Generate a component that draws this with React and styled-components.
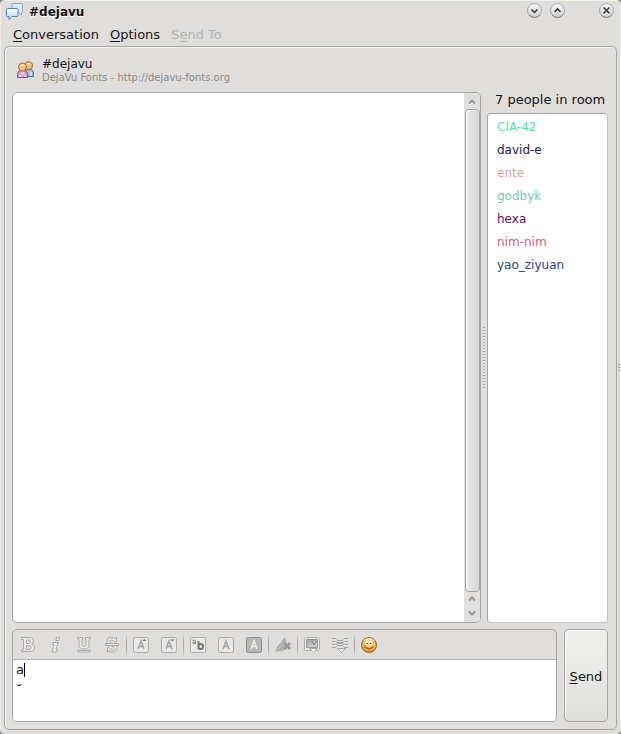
import React, { useState } from 'react';
import styled, { createGlobalStyle, css } from 'styled-components';


const GlobalStyle = createGlobalStyle`
  * {
    box-sizing: border-box;
  }

  body {
    margin: 0;
    background: #8f8e8d;
    color: #141312;
    font-family: "DejaVu Sans", sans-serif;
    font-size: 13px;
    line-height: 16px;
  }

  button, textarea {
    font: inherit;
    color: inherit;
  }
`;

const people = [
  { name: 'CIA-42', color: '#54dfae' },
  { name: 'david-e', color: '#18165c' },
  { name: 'ente', color: '#dba3a3' },
  { name: 'godbyk', color: '#74c8bb' },
  { name: 'hexa', color: '#5e0b5c' },
  { name: 'nim-nim', color: '#cb6080' },
  { name: 'yao_ziyuan', color: '#234784' },
];

const Window = styled.div`
  display: flex;
  flex-direction: column;
  min-height: 100vh;
  padding: 0 3px 4px;
  border: solid #efefee;
  border-width: 1px 1px 0;
  border-radius: 5px;
  background: #dfdedd;
  position: relative;
`;

const TitleBar = styled.header`
  display: flex;
  align-items: center;
  height: 21px;
  padding: 0 2px;
`;

const Title = styled.h1`
  flex: 1;
  margin: 0 0 0 6px;
  font-size: 12px;
  font-weight: bold;
  text-shadow: 0 1px 0 #fff;
`;

const WindowButton = styled.button`
  display: block;
  width: 17px;
  height: 17px;
  margin-left: ${({ $apart }) => ($apart ? '32px' : '6px')};
  padding: 0;
  border: 0;
  background: none;

  svg {
    display: block;
  }
`;

const MenuBar = styled.nav`
  display: flex;
  gap: 11px;
  height: 24px;
  padding: 5px 9px 3px;
`;

const MenuItem = styled.button`
  padding: 0;
  border: 0;
  background: none;
  line-height: 16px;

  &:disabled {
    color: #b5b4b3;
  }
`;

const Key = styled.span`
  text-decoration: underline;
  text-underline-offset: 2px;
  text-decoration-thickness: 1px;
`;

const Panel = styled.main`
  flex: 1;
  display: flex;
  flex-direction: column;
  gap: 6px;
  padding: 0 8px 7px 7px;
  border: 1px solid #a6a5a4;
  border-radius: 5px;
  box-shadow: inset 1px 1px 0 #f3f3f2;
`;

const Room = styled.div`
  flex: 1;
  display: flex;
`;

const Conversation = styled.section`
  flex: 1;
  display: flex;
  flex-direction: column;
`;

const RoomHeader = styled.div`
  display: flex;
  align-items: center;
  gap: 8px;
  height: 45px;
  padding: 0 5px;
`;

const RoomName = styled.h2`
  margin: 0;
  font-size: 12px;
  font-weight: normal;
  line-height: 16px;
`;

const Topic = styled.p`
  margin: 0;
  color: #8a8988;
  font-size: 10px;
  line-height: 12px;
`;

const frame = css`
  border: 1px solid #a6a5a4;
  border-radius: 5px;
  overflow: hidden;
`;

const ChatFrame = styled.div`
  ${frame}
  flex: 1;
  display: flex;
  background: #fff;
`;

const Messages = styled.div`
  flex: 1;
`;

const ScrollBar = styled.div`
  display: flex;
  flex-direction: column;
  align-items: center;
  width: 16px;
  padding: 2px 0;
  background: #e1e0df;

  svg {
    display: block;
  }
`;

const Thumb = styled.div`
  flex: 1;
  width: 15px;
  border: 1px solid #a3a2a1;
  border-radius: 4px;
  background: linear-gradient(90deg, #efeeed, #dfdedd 60%, #d6d5d4);
  box-shadow: inset 1px 1px 0 #fff;
`;

const Splitter = styled.div`
  display: flex;
  align-items: center;
  justify-content: center;
  width: 6px;
  padding-top: 45px;
`;

const Grip = styled.div`
  width: 2px;
  height: 62px;
  background: repeating-linear-gradient(#a9a8a7 0 1px, transparent 1px 3px);
`;

const Members = styled.aside`
  display: flex;
  flex-direction: column;
  width: 121px;
`;

const MemberCount = styled.h2`
  margin: 0;
  padding: 45px 0 5px 8px;
  font-size: 13px;
  font-weight: normal;
  line-height: 16px;
  white-space: nowrap;
`;

const MemberList = styled.ul`
  flex: 1;
  margin: 0;
  padding: 2px 9px;
  border: 1px solid #c5c4c3;
  border-top-color: #a6a5a4;
  border-left-color: #a6a5a4;
  border-radius: 4px;
  background: #fff;
  list-style: none;
`;

const Member = styled.li`
  color: ${({ $color }) => $color};
  font-size: 12px;
  line-height: 23px;
`;

const Composer = styled.form`
  display: flex;
  gap: 7px;
  height: 93px;
`;

const Editor = styled.div`
  ${frame}
  flex: 1;
  display: flex;
  flex-direction: column;
`;

const ToolBar = styled.div`
  display: flex;
  align-items: center;
  height: 30px;
  padding-left: 1px;
  border-bottom: 1px solid #b5b4b3;
`;

const Tool = styled.button`
  width: 28px;
  height: 28px;
  padding: 5px;
  border: 0;
  background: none;

  svg {
    display: block;
  }
`;

const Divider = styled.span`
  width: 1px;
  height: 24px;
  background: linear-gradient(transparent, #a6a5a4 40%, #a6a5a4 60%, transparent);
`;

const TextWrap = styled.div`
  flex: 1;
  display: flex;
  position: relative;
`;

const MessageText = styled.textarea`
  flex: 1;
  padding: 0 3px;
  border: 0;
  outline: 0;
  background: #fff;
  caret-color: transparent;
  line-height: 20px;
  resize: none;
`;

const Caret = styled.span`
  position: absolute;
  top: 3px;
  left: 11px;
  width: 1px;
  height: 14px;
  background: #000;
`;

const SendButton = styled.button`
  width: 44px;
  padding: 2px 0 0;
  border: 1px solid #a6a5a4;
  border-radius: 5px;
  background: linear-gradient(#f0f0ef, #e0dfde);
  box-shadow: inset 1px 1px 0 #fafafa;
`;

const ResizeGrip = styled.div`
  position: absolute;
  top: 363px;
  right: 0;
  width: 2px;
  height: 8px;
  background: repeating-linear-gradient(#a3a2a1 0 1px, transparent 1px 3px);
`;


const RoundIcon = ({ d }) => (
  <svg width="17" height="17" viewBox="0 0 17 17" aria-hidden="true">
    <defs>
      <linearGradient id="knob" x1="0" y1="0" x2="0" y2="1">
        <stop offset="0" stopColor="#f8f8f7" />
        <stop offset="1" stopColor="#cfcecd" />
      </linearGradient>
    </defs>
    <circle cx="8.5" cy="7.5" r="7" fill="url(#knob)" stroke="#a8a7a6" />
    <path d="M3 12Q8.500 17 14 12" fill="none" stroke="#858483" />
    <path d={d} fill="none" stroke="#fff" strokeWidth="1.500" transform="translate(0 1)" />
    <path d={d} fill="none" stroke="#373635" strokeWidth="1.600" />
  </svg>
);

const ChatIcon = () => (
  <svg width="17" height="17" viewBox="0 0 17 17" aria-hidden="true">
    <defs>
      <linearGradient id="bubble" x1="0" y1="0" x2="0" y2="1">
        <stop offset="0" stopColor="#fff" />
        <stop offset="1" stopColor="#b4d3ee" />
      </linearGradient>
    </defs>
    <path d="M7 .5h8.500q1 0 1 1v7q0 1-1 1v2.500l-2.500-2.500H7q-1 0-1-1v-7q0-1 1-1Z" fill="#dce8f2" stroke="#8ba9c4" />
    <path d="M1.500 5.500h9.500q1 0 1 1v6q0 1-1 1H6l-3 3v-3H1.500q-1 0-1-1v-6q0-1 1-1Z" fill="url(#bubble)" stroke="#4b88bd" />
  </svg>
);

const PeopleIcon = () => (
  <svg width="17" height="18" viewBox="0 0 17 18" aria-hidden="true">
    <path d="M8.500 15.500V9.500q1-1 3.500-1t3.500 1q1 1 1 6Z" fill="#a9c1e8" stroke="#3f63a6" />
    <path d="M14 11v4" stroke="#fff" />
    <circle cx="11.500" cy="4.800" r="4" fill="#ecbd7c" stroke="#a06a2c" />
    <path d="M.5 16.500q0-5 1-6 1-1 4-1t4 1q1 1 1 6Z" fill="#d0a8d2" stroke="#7f4a86" />
    <path d="M4 11.500l1.500 2 1.500-2M3 14v2M8 14v2" fill="none" stroke="#fff" />
    <circle cx="5.500" cy="6" r="4" fill="#f0c384" stroke="#a86d2b" />
    <path d="M3.200 5q2.300-2 4.600 0M9.500 3q2-1.500 4 .5" fill="none" stroke="#fae3b8" strokeWidth="1.300" />
  </svg>
);

const Arrow = ({ down }) => (
  <svg width="16" height="14" viewBox="0 0 16 14" aria-hidden="true">
    <path d={down ? 'M5 5.500l3 3 3-3' : 'M5 8.500l3-3 3 3'} fill="none" stroke="#989796" strokeWidth="2" />
  </svg>
);

const ToolIcon = ({ children }) => (
  <svg width="18" height="18" viewBox="0 0 18 18" fill="none" stroke="#aaa9a8" aria-hidden="true">
    {children}
  </svg>
);

const BoldIcon = () => (
  <ToolIcon>
    <path d="M2.500 1.500h8q4 0 4 3.500 0 2-2 3 3 .7 3 3.700 0 3.800-4.500 3.800H2.500v-2h2v-10h-2Z" fill="#ecebea" />
    <path d="M7.500 4h2q2 0 2 1.700t-2 1.800h-2ZM7.500 9.500h2.500q2 0 2 2t-2 2H7.500Z" fill="#dfdedd" />
  </ToolIcon>
);

const ItalicIcon = () => (
  <ToolIcon>
    <path d="M9.500 1.500h3l-.7 3H8.800ZM6 6.500h5L9 13.500h1.500L9.500 16H5L7 8.500H5.500Z" fill="#ecebea" />
  </ToolIcon>
);

const UnderlineIcon = () => (
  <ToolIcon>
    <path d="M2.500 1.500h5V3H7v5.500q0 2 2 2t2-2V3h-.5V1.500h5V3H14v6q0 4-5 4t-5-4V3H2.500Z" fill="#ecebea" />
    <path d="M2.500 14.500h13v1.500h-13Z" fill="#f2f2f1" />
  </ToolIcon>
);

const StrikeIcon = () => (
  <ToolIcon>
    <path d="M13.500 1.500v4.500H12Q11 4 8.500 4 6.500 4 6.500 5.500T10 7.500q4 .8 4 4 0 4.500-4.500 4.500-2 0-3.500-1l-1.500 1v-4.500H6q1 2.500 3.500 2.500 2 0 2-1.500T8.500 10Q4 9 4 5.600 4 1.500 8 1.500q2 0 3.500 1Z" fill="#ecebea" />
    <path d="M2.500 7.500h13v2h-13Z" fill="#ecebea" />
  </ToolIcon>
);

const LetterIcon = ({ mark, filled }) => (
  <ToolIcon>
    <rect x="1.500" y="1.500" width="15" height="15" rx="2" fill={filled ? '#b9b8b7' : '#e9e8e7'} stroke={filled ? '#8e8d8c' : '#adacab'} />
    <path d="M6 13l3-8 3 8M7 10.500h4" stroke={filled ? '#eeedec' : '#a5a4a3'} strokeWidth="1.600" />
    {mark === 'up' && <path d="M10.500 5l2-2 2 2Z" fill="#747372" stroke="none" />}
    {mark === 'down' && <path d="M10.500 3.500h4l-2 2Z" fill="#747372" stroke="none" />}
  </ToolIcon>
);

const FontIcon = () => (
  <ToolIcon>
    <rect x="1.500" y="1.500" width="15" height="15" rx="1" fill="#ebebea" stroke="#adacab" />
    <path d="M3.500 4.500q3-1 3 .5v3M6.500 6q-3-.2-3 1t3 .5" stroke="#858483" />
    <path d="M9.500 5v8.500M9.500 9.500q1-1.500 2.500-1.500 2 0 2 2.500T12 13q-1.500 0-2.500-1" stroke="#777675" strokeWidth="2" />
  </ToolIcon>
);

const ClearIcon = () => (
  <ToolIcon>
    <path d="M11 1l1.500 5-.5 6-3 3-3 .5L1 15.500 3 11Z" fill="#b0afae" stroke="none" />
    <path d="M4 13l3-3" stroke="#c5c4c3" />
    <path d="M10.500 7l5.500 6M16 7l-5.500 6" stroke="#9a9998" strokeWidth="2.800" />
  </ToolIcon>
);

const ImageIcon = () => (
  <ToolIcon>
    <rect x="1.500" y="1.500" width="15" height="13" rx="1" fill="#ebebea" stroke="#adacab" />
    <path d="M3.500 3.500h11v8h-11Z" fill="#b0afae" stroke="#979695" />
    <path d="M4 11q2-5 5-3.500l2-2.500 3 2v4H4Z" fill="#c9c8c7" stroke="none" />
    <path d="M9 5.500l2 3.500 2-3.500" stroke="#858483" />
    <path d="M6.500 12.500h8l-4 4Z" fill="#f3f3f2" />
  </ToolIcon>
);

const ToolsIcon = () => (
  <ToolIcon>
    <path d="M1 2.500h3.500l1.500 2h6l1.500-2H17M1 5.500h3.500l1.500 1h6l1.500-1H17M1 8.500h4l1.500-1h5l1.500 1h4M1 11.500h3.500l1.500-2h6l1.500 2H17" stroke="#a3a2a1" />
    <path d="M4 4h1.500M12.500 4H14M4 10h1.500M12.500 10H14" stroke="#f3f3f2" />
    <path d="M6.500 12.500h8l-4 4Z" fill="#f3f3f2" />
  </ToolIcon>
);

const SmileIcon = () => (
  <ToolIcon>
    <defs>
      <radialGradient id="face" cx=".5" cy=".35" r=".65">
        <stop offset="0" stopColor="#ffdc85" />
        <stop offset=".7" stopColor="#f5b047" />
        <stop offset="1" stopColor="#dd8526" />
      </radialGradient>
    </defs>
    <circle cx="9" cy="9" r="7.500" fill="url(#face)" stroke="#8d5f30" />
    <path d="M4 5q5-4.500 10 0" stroke="#ffeab5" strokeWidth="1.200" />
    <ellipse cx="7" cy="7.300" rx="1.700" ry="2.200" fill="#fff" stroke="none" />
    <ellipse cx="11" cy="7.300" rx="1.700" ry="2.200" fill="#fff" stroke="none" />
    <circle cx="7.400" cy="7.500" r=".8" fill="#4f3419" stroke="none" />
    <circle cx="10.600" cy="7.500" r=".8" fill="#4f3419" stroke="none" />
    <path d="M4.500 10.500q4.500 4.500 9 0" stroke="#a5601c" strokeWidth="1.200" />
  </ToolIcon>
);

const toolGroups = [
  [
    { label: 'Bold', icon: <BoldIcon /> },
    { label: 'Italic', icon: <ItalicIcon /> },
    { label: 'Underline', icon: <UnderlineIcon /> },
    { label: 'Strikethrough', icon: <StrikeIcon /> },
  ],
  [
    { label: 'Larger text', icon: <LetterIcon mark="up" /> },
    { label: 'Smaller text', icon: <LetterIcon mark="down" /> },
  ],
  [
    { label: 'Font', icon: <FontIcon /> },
    { label: 'Text color', icon: <LetterIcon /> },
    { label: 'Background color', icon: <LetterIcon filled /> },
  ],
  [{ label: 'Reset formatting', icon: <ClearIcon /> }],
  [
    { label: 'Insert image', icon: <ImageIcon /> },
    { label: 'Tools', icon: <ToolsIcon /> },
  ],
  [{ label: 'Insert smiley', icon: <SmileIcon /> }],
];


const App = () => {
  const [text, setText] = useState('a\n˘');

  return (
    <Window>
      <GlobalStyle />
      <TitleBar>
        <ChatIcon />
        <Title>#dejavu</Title>
        <WindowButton aria-label="Minimize"><RoundIcon d="M5.500 6.500l3 3 3-3" /></WindowButton>
        <WindowButton aria-label="Maximize"><RoundIcon d="M5.500 9l3-3 3 3" /></WindowButton>
        <WindowButton aria-label="Close" $apart><RoundIcon d="M5.500 4.500l6 6M11.500 4.500l-6 6" /></WindowButton>
      </TitleBar>
      <MenuBar>
        <MenuItem><Key>C</Key>onversation</MenuItem>
        <MenuItem><Key>O</Key>ptions</MenuItem>
        <MenuItem disabled>S<Key>e</Key>nd To</MenuItem>
      </MenuBar>
      <Panel>
        <Room>
          <Conversation>
            <RoomHeader>
              <PeopleIcon />
              <div>
                <RoomName>#dejavu</RoomName>
                <Topic>DejaVu Fonts - http://dejavu-fonts.org</Topic>
              </div>
            </RoomHeader>
            <ChatFrame>
              <Messages />
              <ScrollBar>
                <Arrow />
                <Thumb />
                <Arrow />
                <Arrow down />
              </ScrollBar>
            </ChatFrame>
          </Conversation>
          <Splitter><Grip /></Splitter>
          <Members>
            <MemberCount>{people.length} people in room</MemberCount>
            <MemberList>
              {people.map(({ name, color }) => (
                <Member key={name} $color={color}>{name}</Member>
              ))}
            </MemberList>
          </Members>
        </Room>
        <Composer onSubmit={(e) => e.preventDefault()}>
          <Editor>
            <ToolBar>
              {toolGroups.map((group, i) => (
                <React.Fragment key={i}>
                  {i > 0 && <Divider />}
                  {group.map(({ label, icon }) => (
                    <Tool key={label} type="button" aria-label={label}>{icon}</Tool>
                  ))}
                </React.Fragment>
              ))}
            </ToolBar>
            <TextWrap>
              <MessageText aria-label="Message" value={text} onChange={(e) => setText(e.target.value)} />
              <Caret />
            </TextWrap>
          </Editor>
          <SendButton><Key>S</Key>end</SendButton>
        </Composer>
      </Panel>
      <ResizeGrip />
    </Window>
  );
};


export default App;
